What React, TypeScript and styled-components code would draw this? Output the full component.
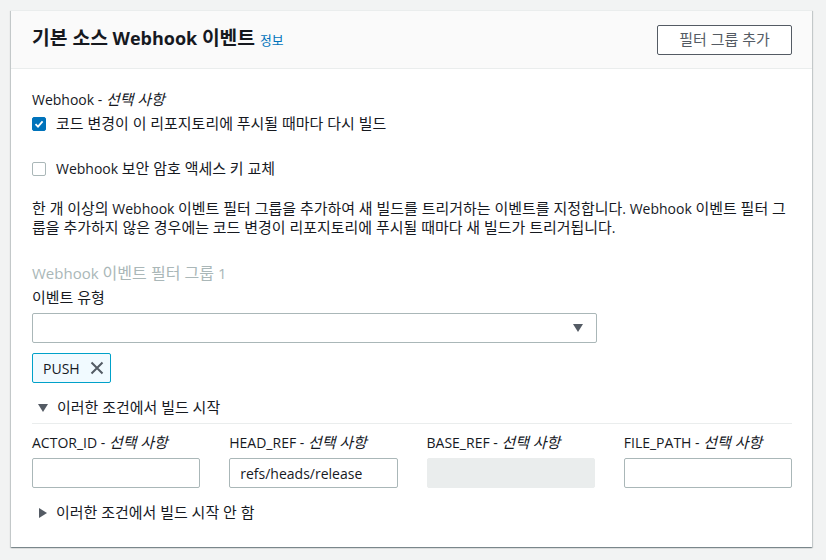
import styled, { createGlobalStyle } from "styled-components"

const GlobalStyle = createGlobalStyle`
  body {
    margin: 0;
    background: #f2f3f3;
    font-family: "Open Sans", "Noto Sans CJK KR", sans-serif;
    font-size: 14px;
    color: #16191f;
  }
`

// hangul runs get a slightly larger size, the korean glyphs in the
// reference are wider than the CJK fallback at the same size
const HANGUL = /([\u3131-\uD79D]+(?:\s+[\u3131-\uD79D]+)*)/
const ko = (text: string) =>
  text.split(HANGUL).map((part, i) => (i % 2 ? <Ko key={i}>{part}</Ko> : part))

const OPTIONAL = "선택 사항"

const conditions = [
  { name: "ACTOR_ID", value: "", disabled: false },
  { name: "HEAD_REF", value: "refs/heads/release", disabled: false },
  { name: "BASE_REF", value: "", disabled: true },
  { name: "FILE_PATH", value: "", disabled: false },
]

const CheckIcon = () => (
  <svg width="10" height="10" viewBox="0 0 10 10">
    <path d="M1.5 5.2 L4 7.6 L8.6 2.4" fill="none" stroke="#fff" strokeWidth="1.8" />
  </svg>
)

const App = (): JSX.Element => {
  return (
    <Page>
      <GlobalStyle />
      <Card>
        <Header>
          <Title>
            <span>{ko("기본 소스 Webhook 이벤트")}</span>
            <InfoLink>{ko("정보")}</InfoLink>
          </Title>
          <Button>{ko("필터 그룹 추가")}</Button>
        </Header>

        <Body>
          <Label>
            Webhook - <Optional>{ko(OPTIONAL)}</Optional>
          </Label>
          <CheckRow>
            <Checkbox checked>
              <CheckIcon />
            </Checkbox>
            <span>{ko("코드 변경이 이 리포지토리에 푸시될 때마다 다시 빌드")}</span>
          </CheckRow>

          <CheckRow spaced>
            <Checkbox />
            <span>{ko("Webhook 보안 암호 액세스 키 교체")}</span>
          </CheckRow>

          <Paragraph>
            {ko(
              "한 개 이상의 Webhook 이벤트 필터 그룹을 추가하여 새 빌드를 트리거하는 이벤트를 지정합니다. Webhook 이벤트 필터 그룹을 추가하지 않은 경우에는 코드 변경이 리포지토리에 푸시될 때마다 새 빌드가 트리거됩니다."
            )}
          </Paragraph>

          <GroupTitle>{ko("Webhook 이벤트 필터 그룹 1")}</GroupTitle>
          <FieldLabel>{ko("이벤트 유형")}</FieldLabel>
          <Select>
            <Caret />
          </Select>
          <Token>
            PUSH
            <svg width="14" height="14" viewBox="0 0 14 14">
              <path d="M1.5 1.5 L12.5 12.5 M12.5 1.5 L1.5 12.5" stroke="#545b64" strokeWidth="2" />
            </svg>
          </Token>

          <Expander>
            <Arrow open />
            <span>{ko("이러한 조건에서 빌드 시작")}</span>
          </Expander>
          <ConditionGrid>
            {conditions.map((c) => (
              <Field key={c.name}>
                <Label>
                  {c.name} - <Optional>{ko(OPTIONAL)}</Optional>
                </Label>
                <Input disabled={c.disabled}>{c.value}</Input>
              </Field>
            ))}
          </ConditionGrid>

          <Expander>
            <Arrow />
            <span>{ko("이러한 조건에서 빌드 시작 안 함")}</span>
          </Expander>
        </Body>
      </Card>
    </Page>
  )
}

export default App

const Ko = styled.span`
  font-size: 1.07em;
  line-height: 1;
`

const Page = styled.div`
  padding: 10px 14px 11px 11px;
`

const Card = styled.div`
  background: #fff;
  border-top: 1px solid #eaeded;
  box-shadow: 0 1px 1px 0 rgba(0, 28, 36, 0.3), 1px 1px 1px 0 rgba(0, 28, 36, 0.15),
    -1px 1px 1px 0 rgba(0, 28, 36, 0.15);
`

const Header = styled.div`
  height: 57px;
  background: #fafafa;
  border-bottom: 1px solid #eaeded;
  display: flex;
  align-items: center;
  justify-content: space-between;
  padding: 0 20px 0 21px;
`

const Title = styled.h2`
  margin: 0;
  font-size: 18px;
  line-height: 24px;
  font-weight: 700;
  color: #16191f;
  display: flex;
  align-items: baseline;
  gap: 5px;
`

const InfoLink = styled.span`
  font-size: 12px;
  font-weight: 400;
  color: #0073bb;
`

const Button = styled.button`
  width: 135px;
  height: 30px;
  border: 1px solid #545b64;
  border-radius: 2px;
  background: #fff;
  font-family: inherit;
  font-size: 14px;
  line-height: 20px;
  color: #545b64;
`

const Body = styled.div`
  padding: 20px 20px 23px 21px;
`

const Label = styled.div`
  line-height: 22px;
  color: #16191f;
`

const FieldLabel = styled(Label)`
  margin-top: 3px;
`

const Optional = styled.i`
  font-style: italic;
`

const CheckRow = styled.label<{ spaced?: boolean }>`
  display: flex;
  align-items: center;
  gap: 10px;
  line-height: 22px;
  margin-top: ${(p) => (p.spaced ? "23px" : "2px")};
`

const Checkbox = styled.span<{ checked?: boolean }>`
  width: 14px;
  height: 14px;
  border-radius: 2px;
  box-sizing: border-box;
  display: flex;
  align-items: center;
  justify-content: center;
  background: ${(p) => (p.checked ? "#0073bb" : "#fff")};
  border: 1px solid ${(p) => (p.checked ? "#0073bb" : "#aab7b8")};
`

const Paragraph = styled.p`
  margin: 19px 0 0;
  line-height: 19px;
  color: #16191f;
`

const GroupTitle = styled.div`
  margin-top: 25px;
  font-size: 15px;
  line-height: 22px;
  color: #aab7b8;
`

const Select = styled.div`
  margin-top: 4px;
  width: 565px;
  height: 30px;
  box-sizing: border-box;
  border: 1px solid #aab7b8;
  border-radius: 2px;
  display: flex;
  align-items: center;
  justify-content: flex-end;
  padding-right: 13px;
`

const Caret = styled.span`
  width: 0;
  height: 0;
  border-left: 5px solid transparent;
  border-right: 5px solid transparent;
  border-top: 8px solid #545b64;
`

const Token = styled.div`
  margin-top: 10px;
  width: 79px;
  height: 30px;
  box-sizing: border-box;
  border: 1px solid #00a1c9;
  border-radius: 2px;
  background: #f1faff;
  display: flex;
  align-items: center;
  gap: 10px;
  padding-left: 10px;
  color: #16191f;
`

const Expander = styled.div`
  display: flex;
  align-items: center;
  gap: 9px;
  line-height: 22px;
  margin-top: 14px;
  padding-left: 6px;
  color: #16191f;
`

const Arrow = styled.span<{ open?: boolean }>`
  width: 0;
  height: 0;
  ${(p) =>
    p.open
      ? `border-left: 5px solid transparent; border-right: 5px solid transparent; border-top: 8px solid #545b64;`
      : `border-top: 5px solid transparent; border-bottom: 5px solid transparent; border-left: 8px solid #545b64; margin-left: 1px;`}
`

const ConditionGrid = styled.div`
  margin-top: 4px;
  border-top: 1px solid #eaeded;
  padding-top: 8px;
  display: grid;
  grid-template-columns: repeat(4, 1fr);
  column-gap: 29px;
`

const Field = styled.div`
  display: flex;
  flex-direction: column;
  gap: 4px;
`

const Input = styled.div<{ disabled?: boolean }>`
  height: 30px;
  box-sizing: border-box;
  border: 1px solid ${(p) => (p.disabled ? "#eaeded" : "#aab7b8")};
  background: ${(p) => (p.disabled ? "#eaeded" : "#fff")};
  border-radius: 2px;
  display: flex;
  align-items: center;
  padding: 0 10px;
  color: #16191f;
`
